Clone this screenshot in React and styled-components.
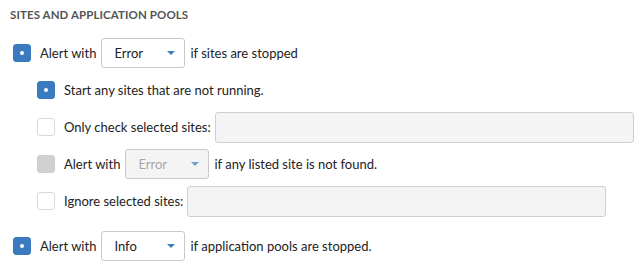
import React from 'react';
import styled, { createGlobalStyle } from 'styled-components';

const GlobalStyle = createGlobalStyle`
  body {
    margin: 0;
    background: #fff;
    font-family: Lato, 'Liberation Sans', sans-serif;
    color: #222;
  }
`;

const StyledPanel = styled.section`
  padding: 7px 0 0 10px;
  display: flex;
  flex-direction: column;
`;
const StyledTitle = styled.h4`
  margin: 0 0 15px;
  font-size: 11.5px;
  font-weight: 700;
  letter-spacing: 0.1px;
  color: #555;
  line-height: 16px;
`;
const StyledRows = styled.div`
  display: flex;
  flex-direction: column;
  gap: 7px;
`;
const StyledRow = styled.div`
  display: flex;
  align-items: center;
  height: 30px;
  padding-left: ${(p) => (p.indent ? 27 : 3)}px;
  margin-top: ${(p) => p.spaced || 0}px;
  font-size: 13px;
  white-space: nowrap;
`;
const StyledBox = styled.span`
  flex: none;
  box-sizing: border-box;
  width: 18px;
  height: 18px;
  margin-right: 9px;
  border-radius: 3px;
  display: flex;
  align-items: center;
  justify-content: center;
  border: 1px solid ${(p) => (p.checked ? '#3a7bbf' : p.disabled ? '#cfcfcf' : '#d9d9d9')};
  background: ${(p) => (p.checked ? '#3a7bbf' : p.disabled ? '#d0d0d0' : '#fff')};
  &::after {
    content: '';
    display: ${(p) => (p.checked ? 'block' : 'none')};
    width: 4px;
    height: 4px;
    border-radius: 50%;
    background: #fff;
  }
`;
const StyledSelect = styled.span`
  box-sizing: border-box;
  display: flex;
  align-items: center;
  justify-content: space-between;
  width: 84px;
  height: 30px;
  margin: 0 5px;
  padding: 0 9px 0 12px;
  border: 1px solid #c8c8c8;
  border-radius: 3px;
  background: ${(p) => (p.disabled ? '#f4f4f4' : '#fff')};
  color: ${(p) => (p.disabled ? '#a8a8a8' : '#222')};
`;
const StyledCaret = styled.span`
  width: 0;
  height: 0;
  border-left: 4px solid transparent;
  border-right: 4px solid transparent;
  border-top: 4px solid #3a7bbf;
  opacity: ${(p) => (p.disabled ? 0.7 : 1)};
`;
const StyledInput = styled.span`
  box-sizing: border-box;
  display: block;
  width: 419px;
  height: 31px;
  margin-left: 4px;
  border: 1px solid #cfcfcf;
  border-radius: 3px;
  background: #f4f4f4;
`;

const Select = ({ value, disabled }) => (
  <StyledSelect disabled={disabled}>
    {value}
    <StyledCaret disabled={disabled} />
  </StyledSelect>
);

const App = () => (
  <>
    <GlobalStyle />
    <StyledPanel>
      <StyledTitle>SITES AND APPLICATION POOLS</StyledTitle>
      <StyledRows>
        <StyledRow>
          <StyledBox checked />
          Alert with
          <Select value="Error" />
          if sites are stopped
        </StyledRow>
        <StyledRow indent>
          <StyledBox checked />
          Start any sites that are not running.
        </StyledRow>
        <StyledRow indent>
          <StyledBox />
          Only check selected sites:
          <StyledInput />
        </StyledRow>
        <StyledRow indent>
          <StyledBox disabled />
          Alert with
          <Select value="Error" disabled />
          if any listed site is not found.
        </StyledRow>
        <StyledRow indent>
          <StyledBox />
          Ignore selected sites:
          <StyledInput />
        </StyledRow>
        <StyledRow spaced={8}>
          <StyledBox checked />
          Alert with
          <Select value="Info" />
          if application pools are stopped.
        </StyledRow>
      </StyledRows>
    </StyledPanel>
  </>
);

export default App;
